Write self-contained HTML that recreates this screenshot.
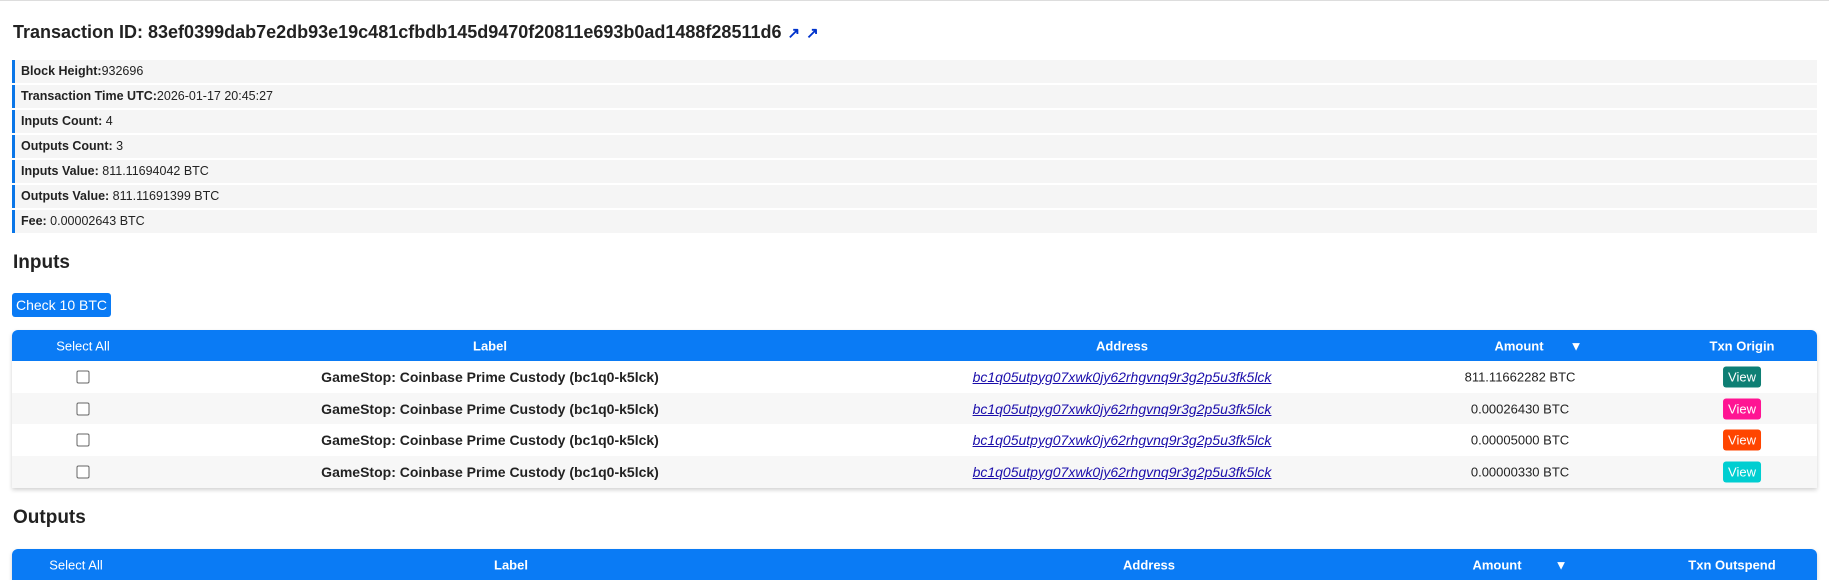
<!DOCTYPE html>
<html><head><meta charset="utf-8"><style>
*{box-sizing:border-box;margin:0;padding:0}
body{width:1829px;height:574px;overflow:hidden;background:#fff;font-family:"Liberation Sans",Arial,sans-serif;color:#222;position:relative;border-top:1px solid #ddd}
.title{position:absolute;left:13px;top:21px;font-size:18px;font-weight:bold;color:#222;white-space:nowrap}
.title span{color:#0033cc;font-size:15px;margin-left:6px}
.info{position:absolute;left:12px;width:1805px;height:23px;background:#f5f5f5;border-left:3px solid #0a76e8;font-size:12.5px;line-height:23px;padding-left:6px;white-space:nowrap}
.info b{font-weight:bold}
h2{position:absolute;left:13px;font-size:19px;font-weight:bold;color:#222}
.btn{position:absolute;left:12px;top:292px;width:99px;height:24px;background:#0a7bf5;color:#fff;border-radius:3px;font-size:14px;line-height:24px;text-align:center}
.tbl{position:absolute;left:12px;width:1805px;box-shadow:0 2px 4px rgba(0,0,0,.18);border-radius:6px 6px 0 0}
.hd{position:relative;height:31px;background:#0a7bf5;border-radius:6px 6px 0 0;color:#fff;font-size:13px;font-weight:bold}
.row{position:relative;height:31.7px;font-size:13px}
.row:nth-child(even){background:#f7f7f7}
.c{position:absolute;top:50%;transform:translate(-50%,-50%);white-space:nowrap}
b.c,a.c{font-size:14px}
a{color:#1a0dab;font-style:italic;text-decoration:underline}
.cb{width:13px;height:13px;border:1px solid #666;border-radius:2px;background:#fff}
.v{color:#fff;border-radius:3px;padding:3px 5px;font-size:13px}
</style></head><body>
<div class="title">Transaction ID: 83ef0399dab7e2db93e19c481cfbdb145d9470f20811e693b0ad1488f28511d6<span>&#8599;</span><span>&#8599;</span></div>
<div class="info" style="top:59px"><b>Block Height:</b>932696</div>
<div class="info" style="top:84px"><b>Transaction Time UTC:</b>2026-01-17 20:45:27</div>
<div class="info" style="top:109px"><b>Inputs Count:</b> 4</div>
<div class="info" style="top:134px"><b>Outputs Count:</b> 3</div>
<div class="info" style="top:159px"><b>Inputs Value:</b> 811.11694042 BTC</div>
<div class="info" style="top:184px"><b>Outputs Value:</b> 811.11691399 BTC</div>
<div class="info" style="top:209px"><b>Fee:</b> 0.00002643 BTC</div>
<h2 style="top:251px">Inputs</h2>
<div class="btn">Check 10 BTC</div>
<div class="tbl" style="top:329px">
<div class="hd"><span class="c" style="left:71px;font-weight:normal">Select All</span><span class="c" style="left:478px">Label</span><span class="c" style="left:1110px">Address</span><span class="c" style="left:1507px">Amount</span><span class="c" style="left:1564px">&#9660;</span><span class="c" style="left:1730px">Txn Origin</span></div>
<div>
<div class="row"><span class="c cb" style="left:71px"></span><b class="c" style="left:478px">GameStop: Coinbase Prime Custody (bc1q0-k5lck)</b><a class="c" style="left:1110px">bc1q05utpyg07xwk0jy62rhgvnq9r3g2p5u3fk5lck</a><span class="c" style="left:1508px">811.11662282 BTC</span><span class="c v" style="left:1730px;background:#0e7f74">View</span></div>
<div class="row"><span class="c cb" style="left:71px"></span><b class="c" style="left:478px">GameStop: Coinbase Prime Custody (bc1q0-k5lck)</b><a class="c" style="left:1110px">bc1q05utpyg07xwk0jy62rhgvnq9r3g2p5u3fk5lck</a><span class="c" style="left:1508px">0.00026430 BTC</span><span class="c v" style="left:1730px;background:#ff1493">View</span></div>
<div class="row"><span class="c cb" style="left:71px"></span><b class="c" style="left:478px">GameStop: Coinbase Prime Custody (bc1q0-k5lck)</b><a class="c" style="left:1110px">bc1q05utpyg07xwk0jy62rhgvnq9r3g2p5u3fk5lck</a><span class="c" style="left:1508px">0.00005000 BTC</span><span class="c v" style="left:1730px;background:#ff4500">View</span></div>
<div class="row"><span class="c cb" style="left:71px"></span><b class="c" style="left:478px">GameStop: Coinbase Prime Custody (bc1q0-k5lck)</b><a class="c" style="left:1110px">bc1q05utpyg07xwk0jy62rhgvnq9r3g2p5u3fk5lck</a><span class="c" style="left:1508px">0.00000330 BTC</span><span class="c v" style="left:1730px;background:#00ced1">View</span></div>
</div></div>
<h2 style="top:506px">Outputs</h2>
<div class="tbl" style="top:548px">
<div class="hd"><span class="c" style="left:64px;font-weight:normal">Select All</span><span class="c" style="left:499px">Label</span><span class="c" style="left:1137px">Address</span><span class="c" style="left:1485px">Amount</span><span class="c" style="left:1549px">&#9660;</span><span class="c" style="left:1720px">Txn Outspend</span></div>
</div>
</body></html>
